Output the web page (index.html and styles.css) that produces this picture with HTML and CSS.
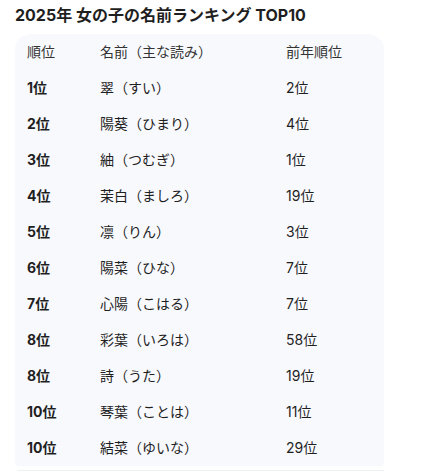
FILE: index.html
```html
<!DOCTYPE html>
<html lang="ja">
<head>
<meta charset="utf-8">
<link rel="stylesheet" href="styles.css">
</head>
<body>
<h2 class="title">2025年 女の子の名前ランキング TOP10</h2>
<div class="card">
  <div class="row head"><span>順位</span><span>名前（主な読み）</span><span>前年順位</span></div>
  <div class="row"><span class="rank">1位</span><span>翠（すい）</span><span>2位</span></div>
  <div class="row"><span class="rank">2位</span><span>陽葵（ひまり）</span><span>4位</span></div>
  <div class="row"><span class="rank">3位</span><span>紬（つむぎ）</span><span>1位</span></div>
  <div class="row"><span class="rank">4位</span><span>茉白（ましろ）</span><span>19位</span></div>
  <div class="row"><span class="rank">5位</span><span>凛（りん）</span><span>3位</span></div>
  <div class="row"><span class="rank">6位</span><span>陽菜（ひな）</span><span>7位</span></div>
  <div class="row"><span class="rank">7位</span><span>心陽（こはる）</span><span>7位</span></div>
  <div class="row"><span class="rank">8位</span><span>彩葉（いろは）</span><span>58位</span></div>
  <div class="row"><span class="rank">8位</span><span>詩（うた）</span><span>19位</span></div>
  <div class="row"><span class="rank">10位</span><span>琴葉（ことは）</span><span>11位</span></div>
  <div class="row"><span class="rank">10位</span><span>結菜（ゆいな）</span><span>29位</span></div>
</div>
<div class="next"></div>
</body>
</html>
```
FILE: styles.css
```css
html, body {
  margin: 0;
  padding: 0;
  background: #ffffff;
}
body {
  padding: 0 15px;
  font-family: Inter, "Noto Sans CJK JP", sans-serif;
  color: #1f1f1f;
}
.title {
  margin: 0;
  padding-top: 5px;
  height: 29px;
  font-size: 16px;
  font-weight: 700;
  line-height: 20px;
  color: #1f1f1f;
}
.card {
  width: 369px;
  box-sizing: border-box;
  background: #f8f9fd;
  border-radius: 16px 16px 4px 4px;
  padding: 0 12px;
}
.row {
  display: grid;
  grid-template-columns: 73px 186px 1fr;
  height: 36px;
  align-items: center;
  font-size: 14px;
  line-height: 20px;
}
.head {
  color: #333333;
}
.rank {
  font-weight: 700;
}
.next {
  margin-top: 4px;
  width: 367px;
  margin-left: 2px;
  height: 4px;
  border-top: 1px solid #eeeff3;
}
```
